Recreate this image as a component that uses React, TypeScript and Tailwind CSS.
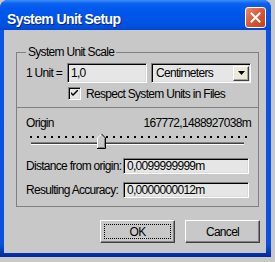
import React from "react";

function Sunken({ className = "", children }: { className?: string; children?: React.ReactNode }) {
  return (
    <div
      className={`border border-t-[#808080] border-l-[#808080] border-b-white border-r-white shadow-[inset_1px_1px_0_#000,inset_-1px_-1px_0_#dcdcdc] bg-[#e6e6e6] flex items-center ${className}`}
    >
      {children}
    </div>
  );
}

function Slider() {
  const dots = [];
  for (let i = 0; i < 32; i++) {
    const x = 13 + Math.round(i * 6.94);
    dots.push(<rect key={i} x={x} y={5} width={2} height={2} fill="#000" />);
  }
  return (
    <svg width="240" height="20" viewBox="0 0 240 20" className="block">
      {dots}
      <rect x={14} y={11} width={213} height={1} fill="#808080" />
      <rect x={14} y={12} width={213} height={1} fill="#404040" />
      <rect x={14} y={13} width={213} height={1} fill="#ffffff" />
      <polygon points="80.5,7 84.5,3 88.5,7 88.5,17.5 80.5,17.5" fill="#c8c8c8" />
      <polyline points="80.5,17 80.5,7 84.5,3" fill="none" stroke="#ffffff" strokeWidth="1" />
      <polyline points="84.5,3 88.5,7 88.5,17.5 80,17.5" fill="none" stroke="#000" strokeWidth="1" />
      <polyline points="87.5,7.5 87.5,16.5 81,16.5" fill="none" stroke="#808080" strokeWidth="1" />
    </svg>
  );
}

export default function App() {
  return (
    <div className="w-[275px] h-[262px] bg-[#c8c8c8] font-['Liberation_Sans',Arial,sans-serif] text-[12px] tracking-[-0.7px] leading-[14px] text-black overflow-hidden">
      <div className="w-[271px] h-[257px] flex flex-col rounded-t-[8px] overflow-hidden bg-[linear-gradient(to_bottom,#0a54e6_0%,#0a50e0_95%,#00299a_100%)]">
        {/* Title bar */}
        <div className="h-[30px] shrink-0 flex items-start justify-between pl-[7px] pr-[5px] bg-[linear-gradient(to_bottom,#3c8df8_0%,#0b62ef_12%,#0058ee_30%,#0054e3_70%,#0050dc_90%,#0047cc_100%)]">
          <span className="mt-[11px] text-white font-bold text-[14px] leading-[17px] tracking-[-0.6px] [text-shadow:1px_1px_0_#0a1f8a]">
            System Unit Setup
          </span>
          <div className="mt-[7px] w-[21px] h-[21px] rounded-[3px] border border-white bg-[linear-gradient(135deg,#e98a6c_0%,#d95d3a_45%,#c43f1c_100%)] flex items-center justify-center">
            <svg width="11" height="11" viewBox="0 0 11 11">
              <path d="M1.5 1.5 L9.5 9.5 M9.5 1.5 L1.5 9.5" stroke="#fff" strokeWidth="2" strokeLinecap="square" />
            </svg>
          </div>
        </div>
        {/* Client area */}
        <div className="flex-1 flex pl-[4px] pr-[5px] pb-[4px]">
          <div className="flex-1 bg-[#c8c8c8] flex flex-col pl-[12px] pt-[15px]">
            <fieldset className="w-[243px] border border-[#808080] pb-[8px]">
              <legend className="ml-[9px] px-[2px] leading-[14px]">System Unit Scale</legend>
              <div className="mt-[4px] h-[20px] flex items-center pl-[9px]">
                <span className="w-[41px]">1 Unit =</span>
                <Sunken className="w-[80px] h-[20px] pl-[3px]">1,0</Sunken>
                <Sunken className="ml-[4px] w-[100px] h-[20px] pl-[4px] justify-between pr-[1px]">
                  <span>Centimeters</span>
                  <div className="w-[16px] h-[15px] bg-[#ece9d8] border border-t-white border-l-white border-b-[#404040] border-r-[#404040] shadow-[inset_-1px_-1px_0_#aca899] flex items-center justify-center">
                    <svg width="7" height="4" viewBox="0 0 7 4">
                      <path d="M0 0 H7 L3.5 4 Z" fill="#000" />
                    </svg>
                  </div>
                </Sunken>
              </div>
              <div className="mt-[4px] h-[13px] flex items-center pl-[51px]">
                <div className="w-[13px] h-[13px] border border-t-[#808080] border-l-[#808080] border-b-white border-r-white shadow-[inset_1px_1px_0_#000,inset_-1px_-1px_0_#dcdcdc] bg-[#e6e6e6] flex items-center justify-center">
                  <svg width="7" height="7" viewBox="0 0 7 7">
                    <path d="M0 2 L0 4 L2 6 L7 1 L7 -1 L2 4 Z" fill="#000" />
                  </svg>
                </div>
                <span className="ml-[5px]">Respect System Units in Files</span>
              </div>
              <div className="mt-[7px] h-px bg-[#808080]" />
              <div className="mt-[8px] h-[14px] flex justify-between pl-[9px] pr-[7px]">
                <span>Origin</span>
                <span>167772,1488927038m</span>
              </div>
              <div className="mt-[1px]">
                <Slider />
              </div>
              <div className="mt-[7px] h-[16px] flex items-center pl-[9px]">
                <span className="w-[97px]">Distance from origin:</span>
                <Sunken className="w-[126px] h-[16px] pl-[3px]">0,0099999999m</Sunken>
              </div>
              <div className="mt-[8px] h-[16px] flex items-center pl-[9px]">
                <span className="w-[97px]">Resulting Accuracy:</span>
                <Sunken className="w-[126px] h-[16px] pl-[3px]">0,0000000012m</Sunken>
              </div>
            </fieldset>
            <div className="mt-[13px] ml-[84px] flex gap-[10px]">
              <div className="w-[75px] h-[23px] bg-[#c8c8c8] border border-t-white border-l-white border-b-[#404040] border-r-[#404040] shadow-[inset_-1px_-1px_0_#808080] p-[3px]">
                <div className="w-full h-full border border-dotted border-black flex items-center justify-center">OK</div>
              </div>
              <div className="w-[75px] h-[23px] bg-[#c8c8c8] border border-t-white border-l-white border-b-[#404040] border-r-[#404040] shadow-[inset_-1px_-1px_0_#808080] flex items-center justify-center">
                Cancel
              </div>
            </div>
          </div>
        </div>
      </div>
    </div>
  );
}
